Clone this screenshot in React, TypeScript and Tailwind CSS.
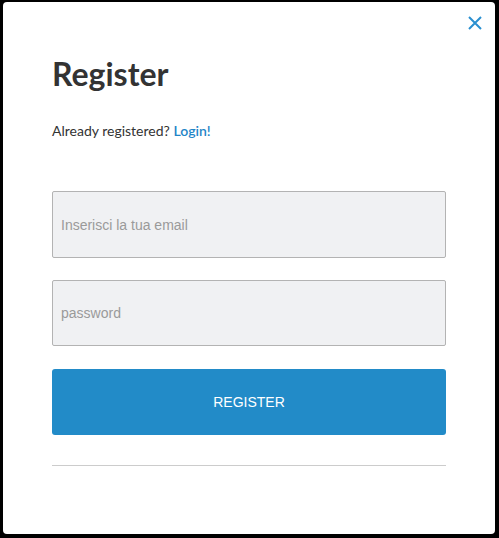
export default function App() {
  return (
    <div className="w-[499px] h-[538px] bg-black pt-[2px] pl-[3px] overflow-hidden">
      <div className="relative w-[492px] h-[532px] bg-white rounded-[4px] px-[49px] pt-[52px] font-['Lato','Liberation_Sans',sans-serif]">
        <button className="absolute right-[11px] top-[12px] w-[18px] h-[18px] flex items-center justify-center text-[#2a8fd0]">
          <svg width="14" height="14" viewBox="0 0 14 14" fill="none" stroke="currentColor" strokeWidth={2}>
            <path d="M1 1l12 12M13 1L1 13" />
          </svg>
        </button>

        <h1 className="text-[32px] leading-[40px] font-bold text-[#333]">Register</h1>

        <p className="mt-[28px] text-[14px] leading-[18px] text-[#333]">
          Already registered? <a className="text-[#1f85c7] font-semibold">Login!</a>
        </p>

        <form className="mt-[51px] flex flex-col">
          <input
            type="email"
            placeholder="Inserisci la tua email"
            className="h-[67px] w-[394px] rounded-[2px] border border-[#b3b3b3] bg-[#f0f1f3] px-[8px] text-[14px] font-['Liberation_Sans',sans-serif] placeholder:text-[#9a9a9a] outline-none"
          />
          <input
            type="password"
            placeholder="password"
            className="mt-[22px] h-[66px] w-[394px] rounded-[2px] border border-[#b3b3b3] bg-[#f0f1f3] px-[8px] text-[14px] font-['Liberation_Sans',sans-serif] placeholder:text-[#9a9a9a] outline-none"
          />
          <button
            type="button"
            className="mt-[23px] h-[66px] w-[394px] rounded-[3px] bg-[#228bc8] text-white text-[14px] font-['Liberation_Sans',sans-serif]"
          >
            REGISTER
          </button>
          <div className="mt-[30px] h-px w-[394px] bg-[#cccccc]" />
        </form>
      </div>
    </div>
  )
}
